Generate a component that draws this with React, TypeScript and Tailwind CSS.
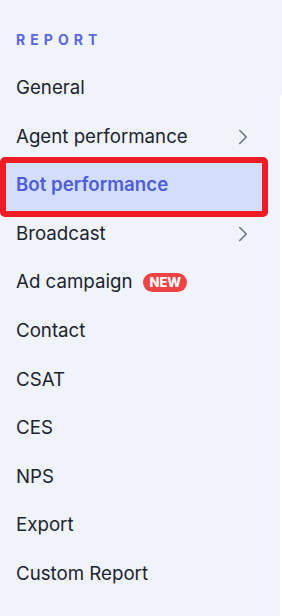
import { ChevronRight } from 'lucide-react'

type Item = { label: string; sub?: boolean; badge?: string; active?: boolean }

const items: Item[] = [
  { label: 'General' },
  { label: 'Agent performance', sub: true },
  { label: 'Bot performance', active: true },
  { label: 'Broadcast', sub: true },
  { label: 'Ad campaign', badge: 'NEW' },
  { label: 'Contact' },
  { label: 'CSAT' },
  { label: 'CES' },
  { label: 'NPS' },
  { label: 'Export' },
  { label: 'Custom Report' },
]

export default function App() {
  return (
    <div
      className="flex h-[616px] w-[282px] bg-[#f0f3f9] overflow-hidden"
      style={{ fontFamily: 'Inter, "Noto Sans", sans-serif' }}
    >
      <nav className="w-[280px] shrink-0">
        <div className="pl-4 pt-[32px] h-[63.7px] text-[14px] font-bold tracking-[0.36em] leading-[16px] text-[#5b67df]">
          REPORT
        </div>
        <div>
          {items.map((it) =>
            it.active ? (
              <div
                key={it.label}
                className="h-[60px] w-[268px] -mt-[4px] -mb-[7.4px] relative rounded-[5px] border-[6px] border-[#ee1c25] bg-[#d4ddfc] flex items-center pl-[10px] pb-[4px]"
              >
                <span className="text-[18.7px] font-semibold text-[#4f5ed8]">{it.label}</span>
              </div>
            ) : (
              <div key={it.label} className="h-[48.6px] flex items-center pl-4 pr-[24px]">
                <span className="text-[18.7px] text-[#1c2330]">{it.label}</span>
                {it.badge && (
                  <span className="ml-[11px] h-[19px] px-[6px] rounded-full bg-[#ee4444] text-white text-[13px] font-extrabold leading-[19px]">
                    {it.badge}
                  </span>
                )}
                {it.sub && <ChevronRight size={26} strokeWidth={1.4} className="ml-auto text-[#6b7280]" />}
              </div>
            ),
          )}
        </div>
      </nav>
      <div className="flex-1 pt-[95px]">
        <div className="h-full bg-white rounded-tl-[4px]" />
      </div>
    </div>
  )
}
